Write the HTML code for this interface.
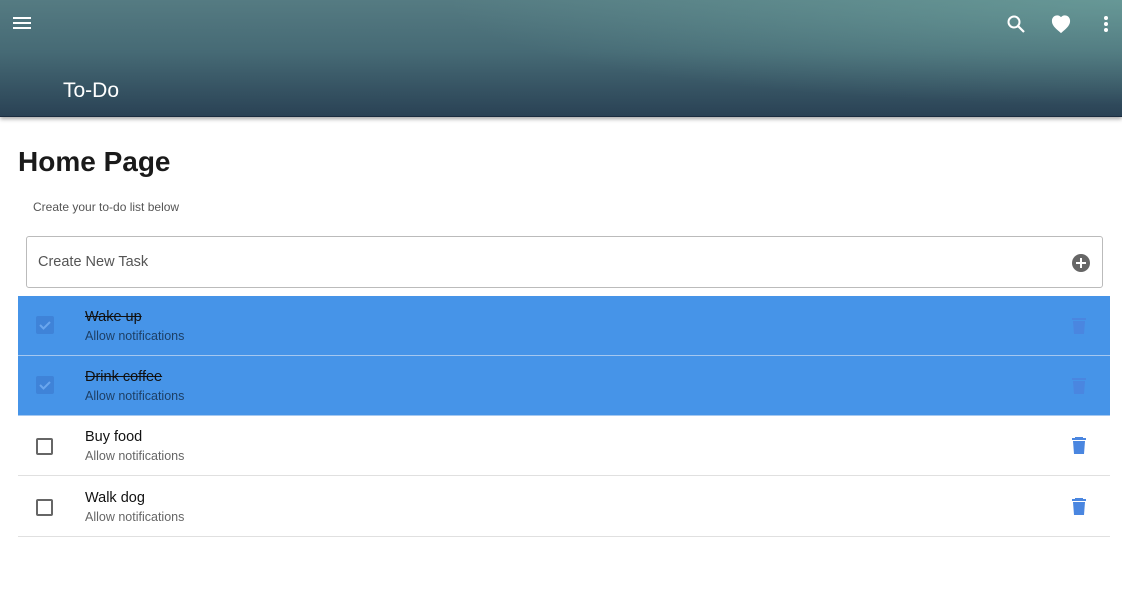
<!DOCTYPE html>
<html><head><meta charset="utf-8"><style>
*{margin:0;padding:0;box-sizing:border-box}
body{width:1122px;height:590px;background:#fff;font-family:"Liberation Sans",sans-serif;position:relative;overflow:hidden}
.hdr{position:absolute;left:0;top:0;width:1122px;height:117px;background:linear-gradient(180deg,#557b82 0%,#466a75 45%,#2a4255 100%);box-shadow:0 2px 4px rgba(0,0,0,.35);border-bottom:1px solid #1b2d40}
.hdr:after{content:"";position:absolute;inset:0;background:radial-gradient(ellipse 60% 90% at 100% 0%,rgba(120,180,170,.5),rgba(120,180,170,0));}
.t{position:absolute;left:63px;top:79px;color:#fff;font-size:21px;z-index:2}
.ic{position:absolute;z-index:2}
h1{position:absolute;left:18px;top:146px;font-size:28px;font-weight:bold;color:#1a1a1a}
.sub{position:absolute;left:33px;top:200px;font-size:12px;color:#555}
.inp{position:absolute;left:26px;top:236px;width:1077px;height:52px;border:1px solid #bbb;border-radius:3px}
.inp span{position:absolute;left:11px;top:17px;font-size:14.5px;color:#555}
.row{position:absolute;left:18px;width:1092px;height:60px;border-bottom:1px solid #e0e0e0}
.row.sel{background:#4694e8;border-bottom:1px solid #a5c8f0}
.cb{position:absolute;left:18px;top:22px;width:17px;height:17px;border:2px solid #666;border-radius:2px}
.sel .cb{border:none;background:#3f83d8;width:18px;height:18px;top:20px}
.ti{position:absolute;left:67px;top:13px;font-size:14.5px;color:#111}
.sel .ti{text-decoration:line-through}
.de{position:absolute;left:67px;top:33px;font-size:12.5px;color:#666}
.sel .de{color:#1d3f66}
.tr{position:absolute;left:1054px;top:21px}
</style></head><body>
<div class="hdr"></div>
<svg class="ic" style="left:12px;top:15px" width="20" height="16"><rect x="1" y="2" width="18" height="2" fill="#fff"/><rect x="1" y="7" width="18" height="2" fill="#fff"/><rect x="1" y="12" width="18" height="2" fill="#fff"/></svg>
<div class="t">To-Do</div>
<svg class="ic" style="left:1006px;top:14px" width="20" height="20"><circle cx="8" cy="8" r="5.5" stroke="#fff" stroke-width="2" fill="none"/><path d="M12 12l6 6" stroke="#fff" stroke-width="2.2"/></svg>
<svg class="ic" style="left:1050px;top:14px" width="22" height="20" viewBox="0 0 24 22"><path d="M12 21l-1.5-1.3C5 15 2 12 2 7.5 2 4 4.5 1.5 8 1.5c1.7 0 3 .8 4 2 1-1.2 2.3-2 4-2 3.5 0 6 2.5 6 6 0 4.5-3 7.5-8.5 12.2z" fill="#fff"/></svg>
<svg class="ic" style="left:1102px;top:14px" width="8" height="20"><circle cx="4" cy="4" r="2" fill="#fff"/><circle cx="4" cy="10" r="2" fill="#fff"/><circle cx="4" cy="16" r="2" fill="#fff"/></svg>
<h1>Home Page</h1>
<div class="sub">Create your to-do list below</div>
<div class="inp"><span>Create New Task</span>
<svg style="position:absolute;left:1044px;top:16px" width="20" height="20"><circle cx="10" cy="10" r="9" fill="#666"/><path d="M10 5v10M5 10h10" stroke="#fff" stroke-width="2"/></svg></div>
<div class="row sel" style="top:296px"><div class="cb"><svg width="18" height="18"><path d="M4 9l3.5 3.5L14 6" stroke="#6aa6ee" stroke-width="2" fill="none"/></svg></div><div class="ti">Wake up</div><div class="de">Allow notifications</div><svg class="tr" width="14" height="18"><rect x="0" y="1" width="14" height="2" fill="#4a86e0"/><path d="M1 4h12l-1 13H2z" fill="#4a86e0"/></svg></div>
<div class="row sel" style="top:356px"><div class="cb"><svg width="18" height="18"><path d="M4 9l3.5 3.5L14 6" stroke="#6aa6ee" stroke-width="2" fill="none"/></svg></div><div class="ti">Drink coffee</div><div class="de">Allow notifications</div><svg class="tr" width="14" height="18"><rect x="0" y="1" width="14" height="2" fill="#4a86e0"/><path d="M1 4h12l-1 13H2z" fill="#4a86e0"/></svg></div>
<div class="row" style="top:416px"><div class="cb"></div><div class="ti">Buy food</div><div class="de">Allow notifications</div><svg class="tr" width="14" height="18"><rect x="3" y="0" width="8" height="2" fill="#4a86e0"/><rect x="0" y="1" width="14" height="2" fill="#4a86e0"/><path d="M1 4h12l-1 13H2z" fill="#4a86e0"/></svg></div>
<div class="row" style="top:477px"><div class="cb"></div><div class="ti">Walk dog</div><div class="de">Allow notifications</div><svg class="tr" width="14" height="18"><rect x="3" y="0" width="8" height="2" fill="#4a86e0"/><rect x="0" y="1" width="14" height="2" fill="#4a86e0"/><path d="M1 4h12l-1 13H2z" fill="#4a86e0"/></svg></div>
</body></html>
